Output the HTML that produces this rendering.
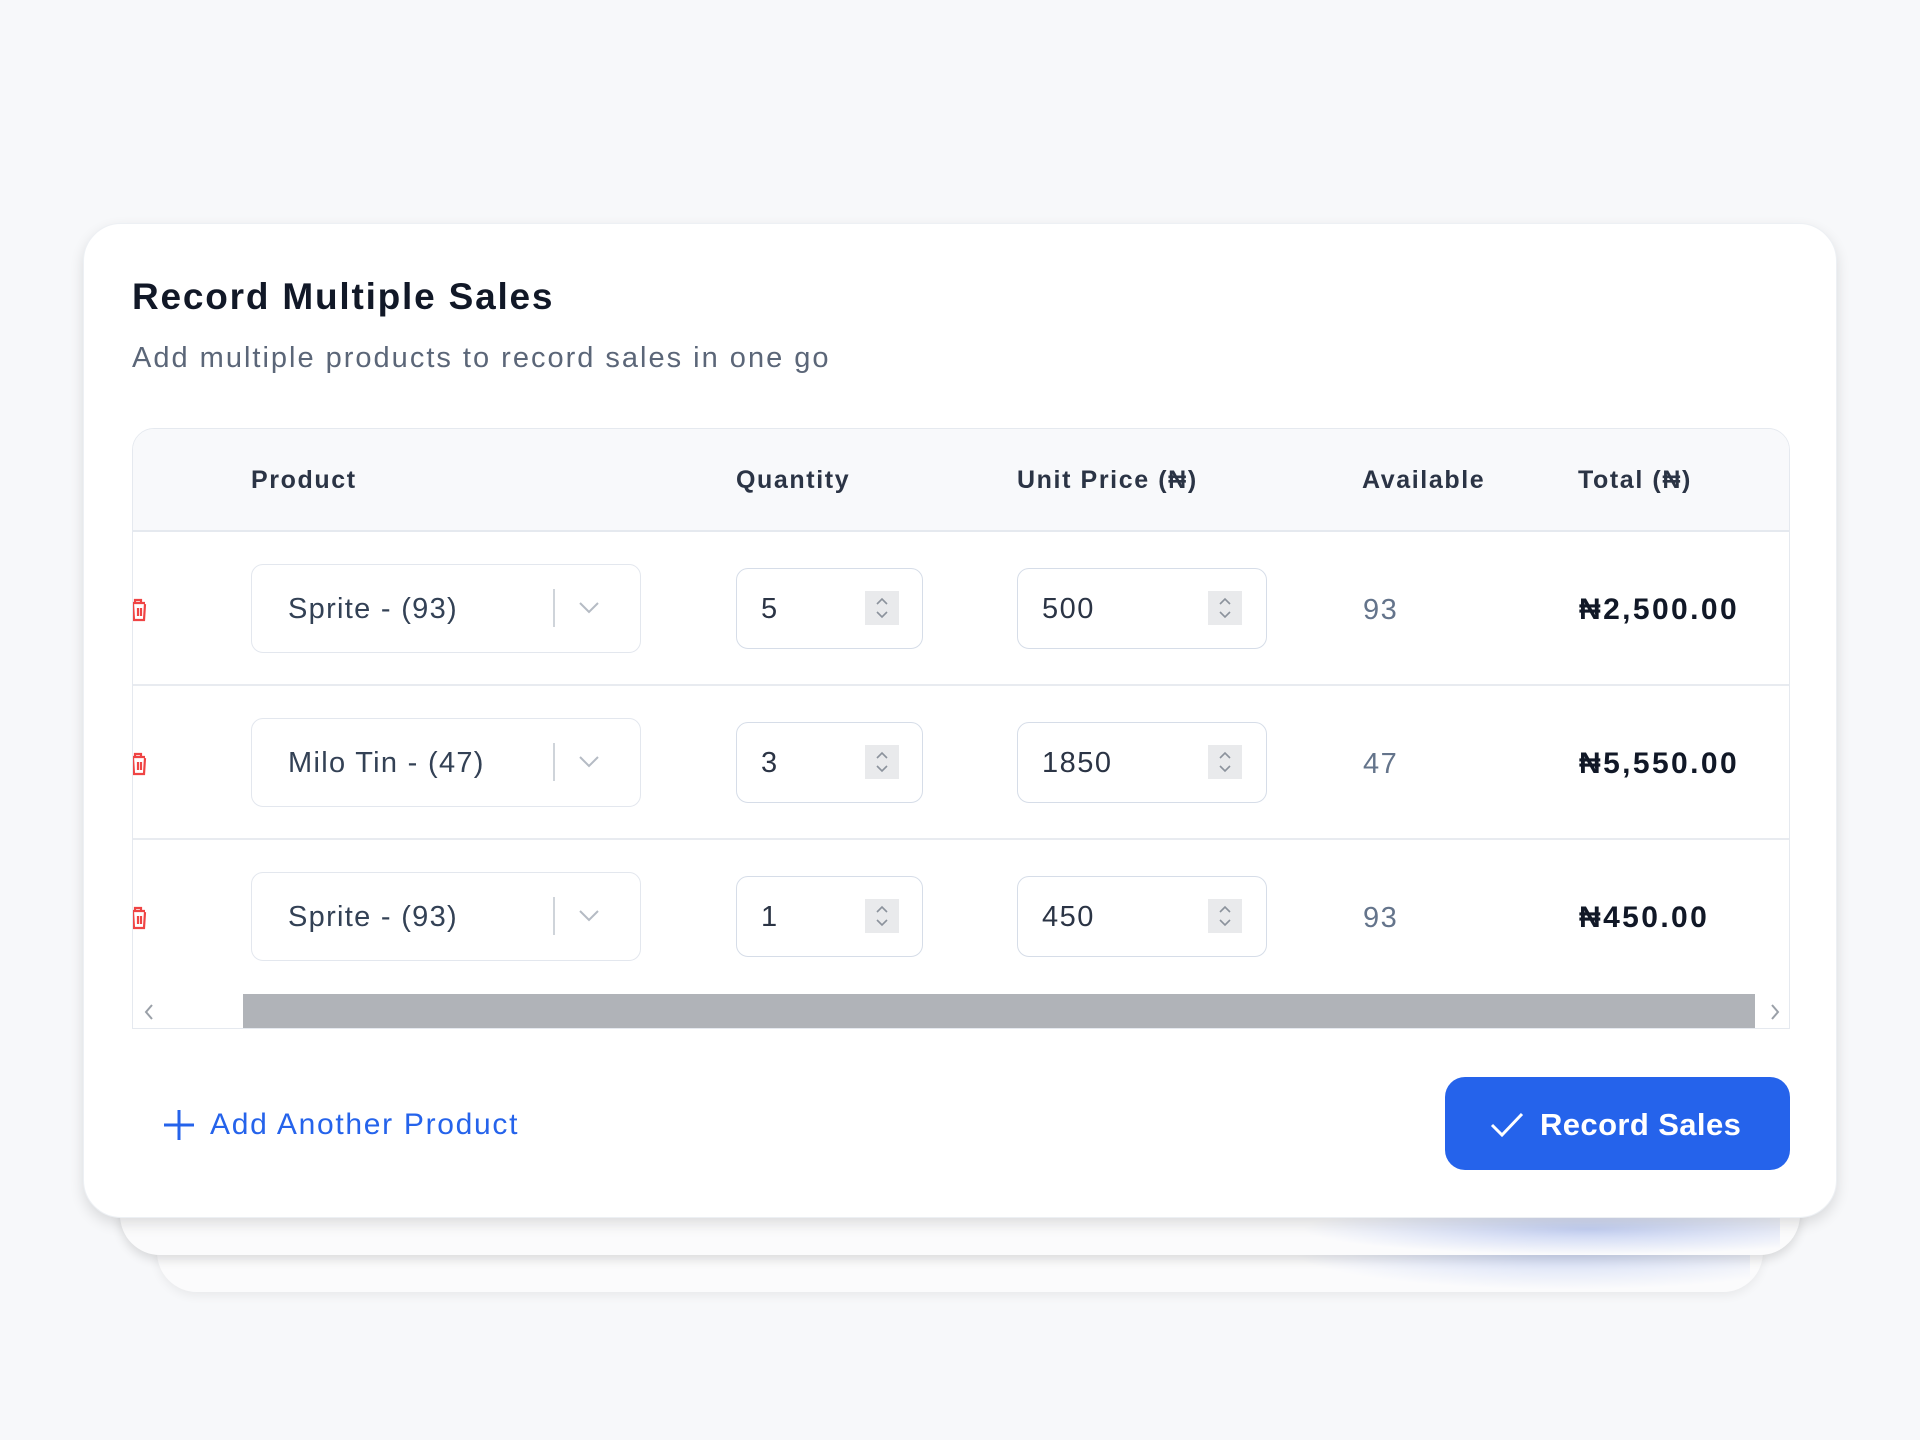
<!DOCTYPE html>
<html><head><meta charset="utf-8"><style>
*{margin:0;padding:0;box-sizing:border-box}
body{width:1920px;height:1440px;background:#f7f8fa;font-family:"Liberation Sans",sans-serif;position:relative;overflow:hidden;color:#1e293b;letter-spacing:1.5px}
.abs{position:absolute}
.layer{position:absolute;background:#fbfbfc;border-radius:0 0 40px 40px}
.card{position:absolute;left:83px;top:223px;width:1754px;height:995px;background:#fff;border-radius:38px;box-shadow:0 6px 14px rgba(0,0,0,.12);border:1px solid #edf0f4}
.title{left:48px;top:52px;font-size:37px;font-weight:600;color:#111827;letter-spacing:1.8px}
.sub{left:48px;top:118px;font-size:29px;color:#5b6678;letter-spacing:2px}
.table{position:absolute;left:48px;top:204px;width:1658px;height:601px;border:1px solid #e5e9ef;border-radius:22px 22px 0 0;overflow:hidden}
.head{position:absolute;left:0;top:0;width:100%;height:103px;background:#f8f9fb;border-bottom:2px solid #e5e9ef}
.h{position:absolute;top:37px;font-size:25px;font-weight:bold;color:#2b3445;letter-spacing:1.6px}
.row{position:absolute;left:0;width:100%;height:154px;border-bottom:2px solid #e8ebf0}
.sel{position:absolute;left:118px;top:32px;width:390px;height:89px;border:1.5px solid #e3e7ee;border-radius:12px}
.sel span{position:absolute;left:36px;top:28px;font-size:29px;color:#334155;letter-spacing:1.3px}
.sel .bar{position:absolute;left:301px;top:24px;width:2px;height:38px;background:#cfd4da}
.inp{position:absolute;top:36px;height:81px;border:1.5px solid #d6dde8;border-radius:12px}
.inp span{position:absolute;left:24px;top:24px;font-size:29px;color:#2b3445}
.spin{position:absolute;top:22px;width:34px;height:34px;background:#e9eaec}
.av{position:absolute;left:1230px;top:62px;font-size:29px;color:#64748b}
.tot{position:absolute;left:1446px;top:61px;font-size:30px;font-weight:bold;color:#111827;letter-spacing:2.4px}
.trash{position:absolute;left:0;top:66px}
</style></head><body>
<div class="layer" style="left:157px;top:1200px;width:1606px;height:92px;box-shadow:0 4px 10px rgba(0,0,0,.06)"></div>
<div class="abs" style="left:1290px;top:1210px;width:460px;height:80px;background:radial-gradient(ellipse at 60% 50%,rgba(120,150,230,.35),rgba(120,150,230,0) 70%)"></div>
<div class="layer" style="left:120px;top:1180px;width:1680px;height:75px;box-shadow:0 5px 10px rgba(0,0,0,.12)"></div>
<div class="abs" style="left:1300px;top:1218px;width:480px;height:37px;background:radial-gradient(ellipse at 60% 30%,rgba(110,140,225,.4),rgba(110,140,225,0) 70%)"></div>
<div class="card">
  <div class="abs title">Record Multiple Sales</div>
  <div class="abs sub">Add multiple products to record sales in one go</div>
  <div class="table">
    <div class="head">
      <div class="h" style="left:118px">Product</div>
      <div class="h" style="left:603px">Quantity</div>
      <div class="h" style="left:884px">Unit Price (₦)</div>
      <div class="h" style="left:1229px">Available</div>
      <div class="h" style="left:1445px">Total (₦)</div>
    </div>
    <div class="row" style="top:103px">
      <svg class="trash" width="14" height="24" viewBox="0 0 14 24"><path d="M-4 5h16M2 5V2h6v3M0 6l1 16h10l1-16M5 10v8M8 10v8" stroke="#ef4444" stroke-width="2.2" fill="none"/></svg>
      <div class="sel"><span>Sprite - (93)</span><div class="bar"></div><svg class="abs" style="left:326px;top:36px" width="22" height="14"><path d="M2 2l9 9 9-9" stroke="#b5bbc4" stroke-width="2" fill="none"/></svg></div>
      <div class="inp" style="left:603px;width:187px"><span>5</span><div class="spin" style="left:128px"><svg width="34" height="34"><path d="M12 13l5-5 5 5M12 21l5 5 5-5" stroke="#8b929c" stroke-width="1.6" fill="none"/></svg></div></div>
      <div class="inp" style="left:884px;width:250px"><span>500</span><div class="spin" style="left:190px"><svg width="34" height="34"><path d="M12 13l5-5 5 5M12 21l5 5 5-5" stroke="#8b929c" stroke-width="1.6" fill="none"/></svg></div></div>
      <div class="av">93</div>
      <div class="tot">₦2,500.00</div>
    </div>
    <div class="row" style="top:257px">
      <svg class="trash" width="14" height="24" viewBox="0 0 14 24"><path d="M-4 5h16M2 5V2h6v3M0 6l1 16h10l1-16M5 10v8M8 10v8" stroke="#ef4444" stroke-width="2.2" fill="none"/></svg>
      <div class="sel"><span>Milo Tin - (47)</span><div class="bar"></div><svg class="abs" style="left:326px;top:36px" width="22" height="14"><path d="M2 2l9 9 9-9" stroke="#b5bbc4" stroke-width="2" fill="none"/></svg></div>
      <div class="inp" style="left:603px;width:187px"><span>3</span><div class="spin" style="left:128px"><svg width="34" height="34"><path d="M12 13l5-5 5 5M12 21l5 5 5-5" stroke="#8b929c" stroke-width="1.6" fill="none"/></svg></div></div>
      <div class="inp" style="left:884px;width:250px"><span>1850</span><div class="spin" style="left:190px"><svg width="34" height="34"><path d="M12 13l5-5 5 5M12 21l5 5 5-5" stroke="#8b929c" stroke-width="1.6" fill="none"/></svg></div></div>
      <div class="av">47</div>
      <div class="tot">₦5,550.00</div>
    </div>
    <div class="row" style="top:411px;border-bottom:none">
      <svg class="trash" width="14" height="24" viewBox="0 0 14 24"><path d="M-4 5h16M2 5V2h6v3M0 6l1 16h10l1-16M5 10v8M8 10v8" stroke="#ef4444" stroke-width="2.2" fill="none"/></svg>
      <div class="sel"><span>Sprite - (93)</span><div class="bar"></div><svg class="abs" style="left:326px;top:36px" width="22" height="14"><path d="M2 2l9 9 9-9" stroke="#b5bbc4" stroke-width="2" fill="none"/></svg></div>
      <div class="inp" style="left:603px;width:187px"><span>1</span><div class="spin" style="left:128px"><svg width="34" height="34"><path d="M12 13l5-5 5 5M12 21l5 5 5-5" stroke="#8b929c" stroke-width="1.6" fill="none"/></svg></div></div>
      <div class="inp" style="left:884px;width:250px"><span>450</span><div class="spin" style="left:190px"><svg width="34" height="34"><path d="M12 13l5-5 5 5M12 21l5 5 5-5" stroke="#8b929c" stroke-width="1.6" fill="none"/></svg></div></div>
      <div class="av">93</div>
      <div class="tot">₦450.00</div>
    </div>
    <div class="abs" style="left:0;top:565px;width:100%;height:36px;background:#fff"></div>
    <svg class="abs" style="left:10px;top:574px" width="12" height="18"><path d="M9 2L3 9l6 7" stroke="#9aa0a8" stroke-width="2" fill="none"/></svg>
    <div class="abs" style="left:110px;top:565px;width:1512px;height:34px;background:#b0b3b8"></div>
    <svg class="abs" style="left:1636px;top:574px" width="12" height="18"><path d="M3 2l6 7-6 7" stroke="#9aa0a8" stroke-width="2" fill="none"/></svg>
  </div>
  <svg class="abs" style="left:78px;top:884px" width="34" height="34"><path d="M17 2v30M2 17h30" stroke="#2563eb" stroke-width="3"/></svg>
  <div class="abs" style="left:126px;top:884px;font-size:30px;color:#2563eb;font-weight:500;letter-spacing:1.7px">Add Another Product</div>
  <div class="abs" style="left:1361px;top:853px;width:345px;height:93px;background:#2563eb;border-radius:20px">
    <svg class="abs" style="left:44px;top:33px" width="36" height="28"><path d="M3 15l10 10L33 4" stroke="#fff" stroke-width="3" fill="none"/></svg>
    <div class="abs" style="left:95px;top:30px;font-size:31px;font-weight:bold;color:#fff;letter-spacing:0.4px">Record Sales</div>
  </div>
</div>
</body></html>
